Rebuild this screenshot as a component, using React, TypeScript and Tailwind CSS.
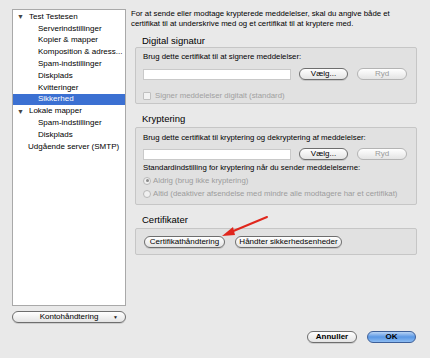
const font = "font-['Liberation_Sans',Arial,sans-serif]";

function Pill({
  children,
  className = "",
  disabled = false,
}: {
  children: React.ReactNode;
  className?: string;
  disabled?: boolean;
}) {
  return (
    <div
      className={`flex h-[12px] items-center justify-center rounded-full border bg-gradient-to-b from-white to-[#e4e4e4] text-[8px] leading-none ${
        disabled ? "border-[#b4b4b4] text-[#9a9a9a]" : "border-[#6e6e6e] text-black shadow-[0_1px_0_rgba(0,0,0,0.12)]"
      } ${className}`}
    >
      {children}
    </div>
  );
}

function Tri() {
  return <span className="mr-[5px] inline-block text-[7px] leading-none text-[#444]">▼</span>;
}

const tree: { label: string; level: number; open?: boolean; selected?: boolean }[] = [
  { label: "Test Testesen", level: 0, open: true },
  { label: "Serverindstillinger", level: 1 },
  { label: "Kopier & mapper", level: 1 },
  { label: "Komposition & adress...", level: 1 },
  { label: "Spam-indstillinger", level: 1 },
  { label: "Diskplads", level: 1 },
  { label: "Kvitteringer", level: 1 },
  { label: "Sikkerhed", level: 1, selected: true },
  { label: "Lokale mapper", level: 0, open: true },
  { label: "Spam-indstillinger", level: 1 },
  { label: "Diskplads", level: 1 },
  { label: "Udgående server (SMTP)", level: 0 },
];

export default function App() {
  return (
    <div className={`relative h-[358px] w-[430px] overflow-hidden bg-[#e9e9e9] text-black ${font}`}>
      <div className="flex">
        {/* SIDEBAR */}
        <div className="ml-[12px] mt-[9px] w-[114px] shrink-0">
          <div className="h-[297px] border border-[#a9a9a9] bg-white pt-[1px]">
            {tree.map((item, i) => (
              <div
                key={i}
                className={`flex h-[11.8px] items-center text-[8px] leading-none ${
                  item.selected ? "bg-[#3b70d2] text-white" : ""
                }`}
                style={{ paddingLeft: item.level === 0 ? (item.open ? 4 : 15) : 25 }}
              >
                {item.open && <Tri />}
                {item.label}
              </div>
            ))}
          </div>
          <Pill className="relative mt-[5px] h-[12px] w-[114px]">
            Kontohåndtering
            <span className="absolute right-[7px] top-[3px] text-[5px] text-[#222]">▼</span>
          </Pill>
        </div>

        {/* RIGHT PANE */}
        <div className="ml-[5px] mt-[9px] w-[286px]">
          <p className="text-[7.8px] leading-[10px]">
            For at sende eller modtage krypterede meddelelser, skal du angive både et certifikat til at
            underskrive med og et certifikat til at kryptere med.
          </p>

          <div className="ml-[11px] mt-[6px] h-[12px] text-[9.5px] leading-[12px]">Digital signatur</div>
          <div className="ml-[4px] h-[57px] rounded-[2px] border border-[#c6c6c6] bg-[#e1e1e1] px-[7px] pt-[4px]">
            <div className="h-[10px] text-[7.8px] leading-[10px]">Brug dette certifikat til at signere meddelelser:</div>
            <div className="mt-[6px] flex items-center">
              <div className="h-[11px] w-[148px] border border-[#c9c9c9] bg-white" />
              <Pill className="ml-[8px] w-[49px]">Vælg...</Pill>
              <Pill className="ml-[9px] w-[50px]" disabled>
                Ryd
              </Pill>
            </div>
            <div className="mt-[10px] flex items-center text-[7.8px] text-[#a0a0a0]">
              <span className="mr-[4px] inline-block h-[8px] w-[8px] rounded-[1px] border border-[#c0c0c0] bg-[#f2f2f2]" />
              Signer meddelelser digitalt (standard)
            </div>
          </div>

          <div className="ml-[11px] mt-[9px] h-[12px] text-[9.5px] leading-[12px]">Kryptering</div>
          <div className="ml-[4px] mt-[2px] h-[78px] rounded-[2px] border border-[#c6c6c6] bg-[#e1e1e1] px-[7px] pt-[5px]">
            <div className="h-[10px] text-[7.8px] leading-[10px]">
              Brug dette certifikat til kryptering og dekryptering af meddelelser:
            </div>
            <div className="mt-[5px] flex items-center">
              <div className="h-[11px] w-[148px] border border-[#c9c9c9] bg-white" />
              <Pill className="ml-[8px] w-[49px]">Vælg...</Pill>
              <Pill className="ml-[9px] w-[50px]" disabled>
                Ryd
              </Pill>
            </div>
            <div className="mt-[3px] h-[10px] text-[7.8px] leading-[10px]">
              Standardindstilling for kryptering når du sender meddelelserne:
            </div>
            <div className="mt-[1px] flex h-[13px] items-center text-[7.8px] text-[#9c9c9c]">
              <span className="mr-[2px] flex h-[8px] w-[8px] items-center justify-center rounded-full border border-[#b8b8b8] bg-[#f0f0f0]">
                <span className="h-[3px] w-[3px] rounded-full bg-[#8a8a8a]" />
              </span>
              Aldrig (brug ikke kryptering)
            </div>
            <div className="flex h-[13px] items-center text-[7.8px] text-[#9c9c9c]">
              <span className="mr-[2px] inline-block h-[8px] w-[8px] rounded-full border border-[#b8b8b8] bg-[#f0f0f0]" />
              Altid (deaktiver afsendelse med mindre alle modtagere har et certifikat)
            </div>
          </div>

          <div className="ml-[11px] mt-[9px] h-[12px] text-[9.5px] leading-[12px]">Certifikater</div>
          <div className="ml-[4px] mt-[2px] flex h-[27px] items-center rounded-[2px] border border-[#c6c6c6] bg-[#e1e1e1] px-[8px]">
            <Pill className="w-[81px]">Certifikathåndtering</Pill>
            <Pill className="ml-[10px] w-[107px]">Håndter sikkerhedsenheder</Pill>
          </div>
        </div>
      </div>

      {/* BOTTOM BUTTONS */}
      <div className="absolute right-[14px] top-[331px] flex">
        <Pill className="w-[50px] font-bold">Annuller</Pill>
        <div className="ml-[10px] flex h-[12px] w-[49px] items-center justify-center rounded-full border border-[#3d5f98] bg-gradient-to-b from-[#b9d4f4] via-[#5a97e4] to-[#8cbcf2] text-[8px] font-bold leading-none text-black">
          OK
        </div>
      </div>

      {/* RED ARROW */}
      <svg className="absolute left-0 top-0" width="430" height="358" viewBox="0 0 430 358">
        <line x1="267" y1="217" x2="231" y2="232" stroke="#e0261c" strokeWidth="2" strokeLinecap="round" />
        <polygon points="222,236 233,227 235,235" fill="#e0261c" />
      </svg>
    </div>
  );
}
